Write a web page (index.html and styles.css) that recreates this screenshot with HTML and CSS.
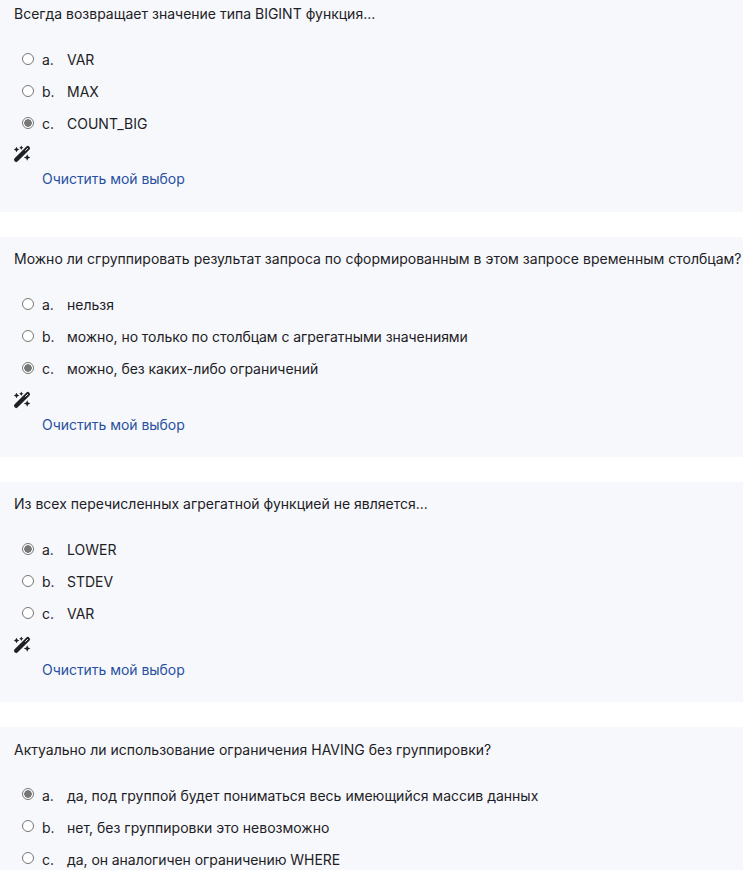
FILE: index.html
```html
<!DOCTYPE html>
<html lang="ru">
<head>
<meta charset="utf-8">
<title>Тест</title>
<link rel="stylesheet" href="styles.css">
</head>
<body>
<svg class="defs" width="0" height="0">
  <symbol id="wand" viewBox="0 0 16 16" overflow="visible">
    <path d="M2.2 13.8 13.8 2.2" stroke="currentColor" stroke-width="4.4" stroke-linecap="round"/>
    <path d="M11.6 4.4 13.6 2.4" stroke="#f7f8fc" stroke-width="1" stroke-linecap="round"/>
    <path fill="currentColor" d="M2.5 .8 3.4 2.6 5.3 3.5 3.4 4.4 2.5 6.2 1.6 4.4 -.2 3.5 1.6 2.6ZM7.3 -.4 8 1 9.4 1.7 8 2.4 7.3 3.9 6.6 2.4 5.2 1.7 6.6 1ZM13.2 8.2 14.2 10.4 16.4 11.4 14.2 12.4 13.2 14.8 12.2 12.4 9.8 11.4 12.2 10.4Z"/>
  </symbol>
</svg>
<main>
  <section class="question">
    <p class="text">Всегда возвращает значение типа BIGINT функция...</p>
    <div class="answers">
      <label><input type="radio" name="q1"><span class="num">a.</span><span>VAR</span></label>
      <label><input type="radio" name="q1"><span class="num">b.</span><span>MAX</span></label>
      <label><input type="radio" name="q1" checked><span class="num">c.</span><span>COUNT_BIG</span></label>
    </div>
    <svg class="wand"><use href="#wand"/></svg>
    <a class="clear">Очистить мой выбор</a>
  </section>
  <section class="question">
    <p class="text wide">Можно ли сгруппировать результат запроса по сформированным в этом запросе временным столбцам?</p>
    <div class="answers">
      <label><input type="radio" name="q2"><span class="num">a.</span><span>нельзя</span></label>
      <label><input type="radio" name="q2"><span class="num">b.</span><span class="long">можно, но только по столбцам с агрегатными значениями</span></label>
      <label><input type="radio" name="q2" checked><span class="num">c.</span><span class="long">можно, без каких-либо ограничений</span></label>
    </div>
    <svg class="wand"><use href="#wand"/></svg>
    <a class="clear">Очистить мой выбор</a>
  </section>
  <section class="question">
    <p class="text">Из всех перечисленных агрегатной функцией не является...</p>
    <div class="answers">
      <label><input type="radio" name="q3" checked><span class="num">a.</span><span>LOWER</span></label>
      <label><input type="radio" name="q3"><span class="num">b.</span><span>STDEV</span></label>
      <label><input type="radio" name="q3"><span class="num">c.</span><span>VAR</span></label>
    </div>
    <svg class="wand"><use href="#wand"/></svg>
    <a class="clear">Очистить мой выбор</a>
  </section>
  <section class="question last">
    <p class="text">Актуально ли использование ограничения HAVING без группировки?</p>
    <div class="answers">
      <label><input type="radio" name="q4" checked><span class="num">a.</span><span>да, под группой будет пониматься весь имеющийся массив данных</span></label>
      <label><input type="radio" name="q4"><span class="num">b.</span><span>нет, без группировки это невозможно</span></label>
      <label><input type="radio" name="q4"><span class="num">c.</span><span class="long">да, он аналогичен ограничению WHERE</span></label>
    </div>
  </section>
</main>
</body>
</html>
```
FILE: styles.css
```css
body {
  margin: 0;
  background: #fff;
  color: #1d2125;
  font: 14px/24px Inter, sans-serif;
}
.defs { display: block; }
main {
  display: flex;
  flex-direction: column;
  gap: 25.3px;
  height: 870px;
  overflow: hidden;
}
.question {
  box-sizing: border-box;
  flex: none;
  height: 219.8px;
  padding: 10px 0 0 14px;
  background: #f7f8fc;
  white-space: nowrap;
}
.question:first-child { height: 211.8px; padding-top: 2px; }
.question.last { flex: 1; min-height: 0; padding-top: 10.6px; }
.text { margin: 0 0 18px; }
.text.wide { letter-spacing: 0.01px; }
.long { letter-spacing: -0.06px; }
.answers label {
  display: flex;
  align-items: center;
  height: 32px;
}
.answers input {
  appearance: none;
  box-sizing: border-box;
  width: 12px;
  height: 12px;
  margin: -3px 8px 0;
  border: 1px solid #767676;
  border-radius: 50%;
  background: #fff;
}
.answers input:checked { background: radial-gradient(circle, #767676 0 3.5px, #fff 4px); }
.num { width: 25px; }
.wand {
  display: block;
  width: 16px;
  height: 16px;
  margin-top: 7px;
  overflow: visible;
}
.question:first-child .wand { margin-top: 6.3px; }
.clear {
  display: block;
  margin: 5px 0 0 28px;
  color: #2850a0;
  letter-spacing: -0.04px;
}
```
